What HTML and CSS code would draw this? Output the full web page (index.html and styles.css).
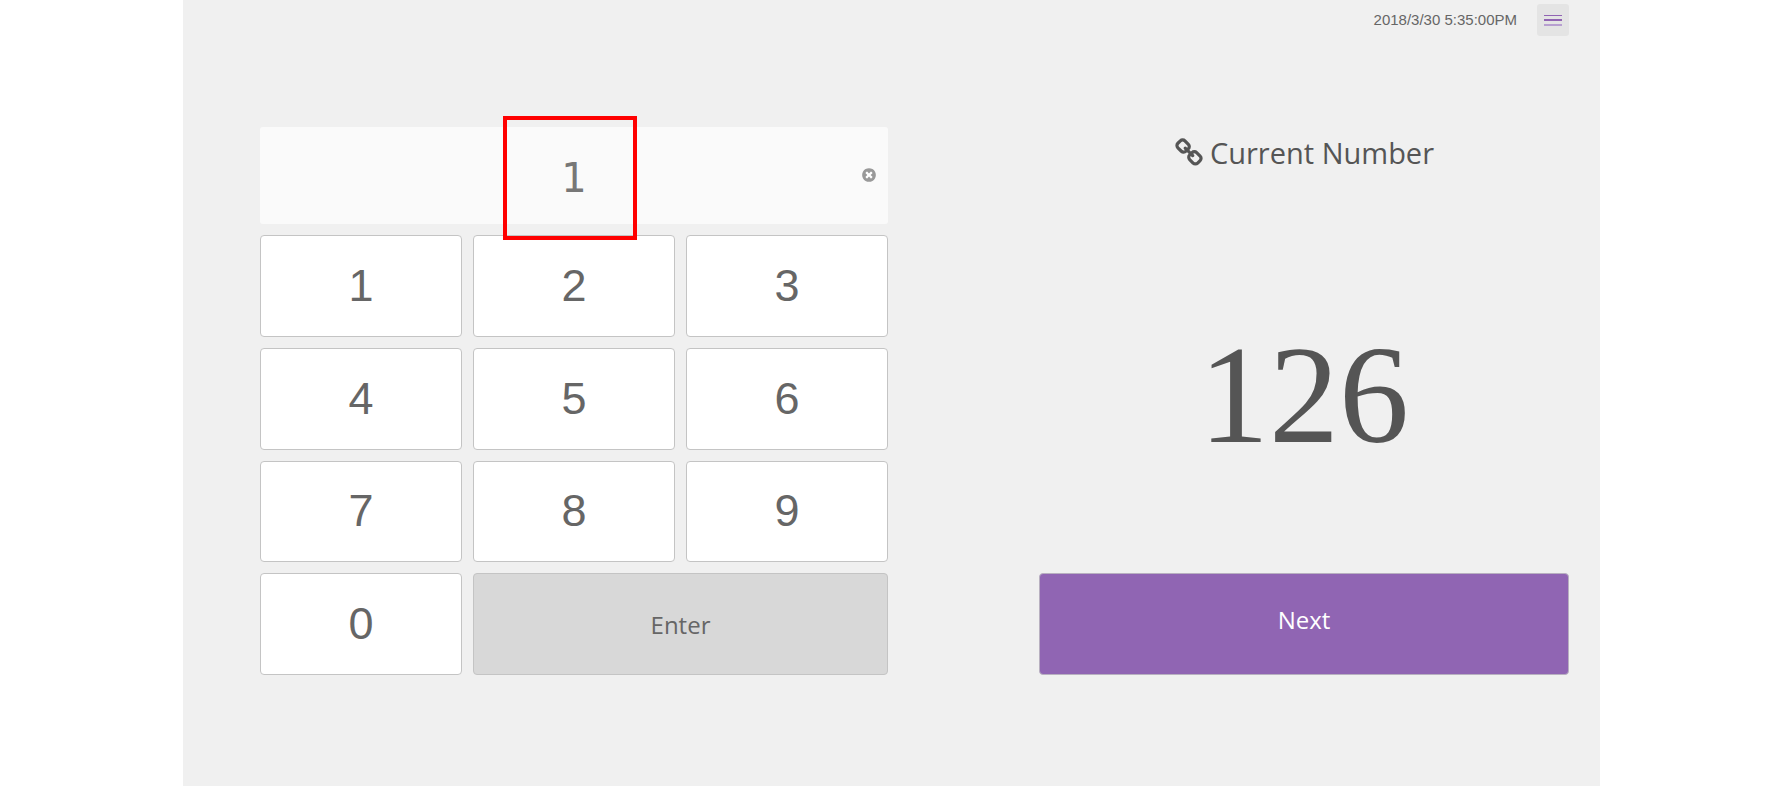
FILE: index.html
```html
<!DOCTYPE html>
<html lang="en">
<head>
<meta charset="utf-8">
<meta name="viewport" content="width=device-width, initial-scale=1">
<title>Current Number</title>
<link rel="stylesheet" href="styles.css">
</head>
<body>
<div class="panel">
  <header class="topbar">
    <time class="clock" datetime="2018-03-30T17:35:00">2018/3/30 5:35:00PM</time>
    <button class="menu-button" type="button" aria-label="Menu">
      <svg class="menu-icon" viewBox="0 0 18 12" aria-hidden="true">
        <rect x="0" y="1" width="18" height="1" fill="#9164b3"/>
        <rect x="0" y="5" width="18" height="2" fill="#9164b3"/>
        <rect x="0" y="10" width="18" height="2" fill="#b79fd0"/>
      </svg>
    </button>
  </header>
  <main class="content">
    <form class="keypad">
      <div class="display">
        <input class="display-input" type="text" value="1" aria-label="Number">
        <button class="clear-button" type="button" aria-label="Clear">
          <svg class="clear-icon" viewBox="0 0 1792 1792" aria-hidden="true">
            <circle cx="896" cy="896" r="600" fill="#fff"/>
            <path fill="#999" d="M1277 1122q0-26-19-45l-181-181 181-181q19-19 19-45 0-27-19-46l-90-90q-19-19-46-19-26 0-45 19l-181 181-181-181q-19-19-45-19-27 0-46 19l-90 90q-19 19-19 46 0 26 19 45l181 181-181 181q-19 19-19 45 0 27 19 46l90 90q19 19 46 19 26 0 45-19l181-181 181 181q19 19 45 19 27 0 46-19l90-90q19-19 19-46zm387-226q0 209-103 385.5t-279.5 279.5-385.5 103-385.5-103-279.5-279.5-103-385.5 103-385.5 279.5-279.5 385.5-103 385.5 103 279.5 279.5 103 385.5z"/>
          </svg>
        </button>
        <div class="highlight"></div>
      </div>
      <button class="key" type="button">1</button>
      <button class="key" type="button">2</button>
      <button class="key" type="button">3</button>
      <button class="key" type="button">4</button>
      <button class="key" type="button">5</button>
      <button class="key" type="button">6</button>
      <button class="key" type="button">7</button>
      <button class="key" type="button">8</button>
      <button class="key" type="button">9</button>
      <button class="key" type="button">0</button>
      <button class="key key-enter" type="button">Enter</button>
    </form>
    <section class="current">
      <h1 class="current-title">
        <svg class="link-icon" viewBox="0 0 1792 1792" aria-hidden="true"><path fill="currentColor" d="M1520 1216q0-40-28-68l-208-208q-28-28-68-28-42 0-72 32 3 3 19 18.500t21.500 21.500 15 19 13 25.500 3.500 27.500q0 40-28 68t-68 28q-15 0-27.500-3.500t-25.500-13-19-15-21.500-21.500-18.500-19q-33 31-33 73 0 40 28 68l206 207q27 27 68 27 40 0 68-26l147-146q28-28 28-67zm-703-705q0-40-28-68l-206-207q-28-28-68-28-39 0-68 27l-147 146q-28 28-28 67 0 40 28 68l208 208q27 27 68 27 42 0 72-31-3-3-19-18.500t-21.500-21.500-15-19-13-25.500-3.500-27.500q0-40 28-68t68-28q15 0 27.500 3.500t25.500 13 19 15 21.500 21.500 18.500 19q33-31 33-73zm895 705q0 120-85 203l-147 146q-83 83-203 83-121 0-204-85l-206-207q-83-83-83-203 0-123 88-209l-88-88q-86 88-208 88-120 0-204-84l-208-208q-84-84-84-204t85-203l147-146q83-83 203-83 121 0 204 85l206 207q83 83 83 203 0 123-88 209l88 88q86-88 208-88 120 0 204 84l208 208q84 84 84 204z"/></svg>
        <span>Current Number</span>
      </h1>
      <p class="current-number">126</p>
      <button class="next-button" type="button">Next</button>
    </section>
  </main>
</div>
</body>
</html>
```
FILE: styles.css
```css
* {
  box-sizing: border-box;
}

body {
  margin: 0;
  background: #fff;
  color: #555;
  font-family: "Open Sans", "Noto Sans", sans-serif;
}

button,
input {
  margin: 0;
  padding: 0;
  border: 0;
  color: inherit;
  font-family: inherit;
}

.panel {
  min-height: 100vh;
  margin: 0 167px 0 183px;
  padding: 4px 31px 40px 77px;
  background: #f0f0f0;
}

.topbar {
  display: flex;
  justify-content: flex-end;
  gap: 20px;
}

.clock {
  color: #666;
  font-family: "Liberation Sans", Arial, sans-serif;
  font-size: 15px;
  line-height: 32px;
}

.menu-button {
  display: flex;
  align-items: center;
  justify-content: center;
  width: 32px;
  height: 32px;
  border-radius: 3px;
  background: #e4e4e4;
}

.menu-icon {
  width: 18px;
  height: 12px;
}

.content {
  display: grid;
  grid-template-columns: 628fr 530fr;
  column-gap: 151px;
  margin-top: 91px;
}

.keypad {
  display: grid;
  grid-template-columns: repeat(3, 1fr);
  grid-template-rows: 97px repeat(4, 1fr);
  gap: 11px;
  min-height: 548px;
}

.display {
  position: relative;
  grid-column: 1 / -1;
  display: flex;
}

.display-input {
  width: 100%;
  padding-top: 4px;
  border-radius: 3px;
  background: #fafafa;
  color: #777;
  font-family: "DejaVu Sans", sans-serif;
  font-size: 40px;
  text-align: center;
}

.clear-button {
  position: absolute;
  top: 40px;
  right: 11px;
  width: 16px;
  height: 16px;
  background: none;
}

.clear-icon {
  display: block;
  width: 16px;
  height: 16px;
}

.highlight {
  position: absolute;
  top: -11px;
  left: 243px;
  width: 134px;
  height: 124px;
  border: 4px solid #f00;
  pointer-events: none;
}

.key {
  border: 1px solid #c4c4c4;
  border-radius: 4px;
  background: #fff;
  color: #666;
  font-family: "Liberation Sans", Arial, sans-serif;
  font-size: 45px;
}

.key-enter {
  grid-column: span 2;
  background: #d8d8d8;
  font-family: "Open Sans", "Noto Sans", sans-serif;
  font-size: 24px;
}

.current {
  display: flex;
  flex-direction: column;
}

.current-title {
  display: flex;
  align-items: center;
  justify-content: center;
  gap: 6px;
  margin: 0;
  font-size: 29px;
  font-weight: 400;
  line-height: 52px;
}

.link-icon {
  width: 30px;
  height: 30px;
}

.current-number {
  flex: 1;
  display: flex;
  align-items: center;
  justify-content: center;
  margin: 0;
  padding-top: 38px;
  font-family: "Liberation Serif", "Times New Roman", serif;
  font-size: 140px;
  line-height: 1;
}

.next-button {
  height: 102px;
  padding-bottom: 10px;
  border: 1px solid #b8b0c0;
  border-radius: 4px;
  background: #9065b3;
  color: #fff;
  font-size: 24px;
}
```
